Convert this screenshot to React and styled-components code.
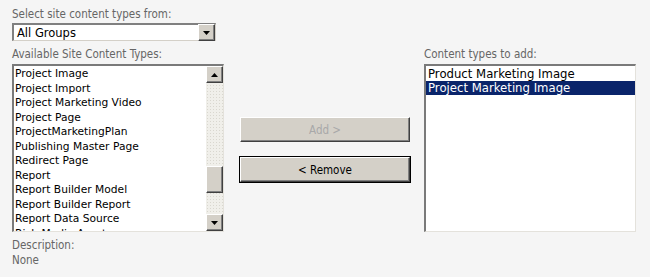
import React from 'react'
import styled, { createGlobalStyle } from 'styled-components'

const Global = createGlobalStyle`
  html, body {
    margin: 0;
    background: #f5f5f5;
  }
`

const Page = styled.div`
  width: 650px;
  height: 277px;
  box-sizing: border-box;
  padding: 7px 0 0 12px;
  background: #f5f5f5;
  font-family: "DejaVu Sans Condensed", Tahoma, sans-serif;
`

const Label = styled.div`
  font-size: 11.5px;
  line-height: 14px;
  color: #666;
  height: ${(p) => p.h || 14}px;
`

const SelectBox = styled.div`
  width: 204px;
  height: 18px;
  box-sizing: border-box;
  margin-top: 2px;
  background: #fff;
  border-top: 2px solid #808080;
  border-left: 2px solid #808080;
  border-right: 1px solid #d4d0c8;
  border-bottom: 1px solid #d4d0c8;
  display: flex;
  align-items: center;
  justify-content: space-between;
  font-family: "DejaVu Sans", Verdana, sans-serif;
  font-size: 11.5px;
  color: #000;
  padding-left: 3px;
`

const Row = styled.div`
  display: flex;
  align-items: flex-start;
  margin-top: 6px;
`

const Column = styled.div`
  display: flex;
  flex-direction: column;
  width: ${(p) => p.w}px;
`

const ListBox = styled.div`
  width: ${(p) => p.w}px;
  height: 168px;
  box-sizing: border-box;
  margin-top: 3px;
  background: #fff;
  border-top: 2px solid #7a7a7a;
  border-left: 2px solid #7a7a7a;
  border-right: 1px solid #e4e2dc;
  border-bottom: 1px solid #e4e2dc;
  display: flex;
  overflow: hidden;
`

const Items = styled.div`
  flex: 1;
  overflow: hidden;
  padding-top: 1px;
`

const Item = styled.div`
  font-family: "DejaVu Sans", Verdana, sans-serif;
  font-size: ${(p) => p.size || 10.7}px;
  line-height: ${(p) => p.rowH || 14.5}px;
  height: ${(p) => p.rowH || 14.5}px;
  padding-left: ${(p) => (p.size ? 2 : 1)}px;
  white-space: nowrap;
  color: ${(p) => (p.selected ? '#fff' : '#000')};
  background: ${(p) => (p.selected ? '#0a246a' : 'transparent')};
`

const ScrollBar = styled.div`
  width: 17px;
  display: flex;
  flex-direction: column;
  background-color: #f0efea;
  background-image: radial-gradient(#d9d7cf 0.8px, transparent 1px);
  background-size: 3px 3px;
`

const ArrowButton = styled.div`
  width: 17px;
  height: 17px;
  box-sizing: border-box;
  background: #d4d0c8;
  border-top: 1px solid #fff;
  border-left: 1px solid #fff;
  border-right: 1px solid #404040;
  border-bottom: 1px solid #404040;
  box-shadow: inset -1px -1px 0 #808080;
  display: flex;
  align-items: center;
  justify-content: center;
  flex-shrink: 0;
`

const Track = styled.div`
  flex: 1;
  display: flex;
  flex-direction: column;
`

const Thumb = styled(ArrowButton)`
  height: 27px;
  margin-top: ${(p) => p.offset}px;
`

const Middle = styled.div`
  width: 170px;
  margin: 70px 14px 0 16px;
  display: flex;
  flex-direction: column;
  gap: 15px;
`

const Button = styled.button`
  width: 170px;
  height: 25px;
  box-sizing: border-box;
  background: #d4d0c8;
  font-family: "DejaVu Sans Condensed", Tahoma, sans-serif;
  font-size: 11.5px;
  color: ${(p) => (p.disabled ? '#a8a8a8' : '#000')};
  border-top: 1px solid #fff;
  border-left: 1px solid #fff;
  border-right: 1px solid #404040;
  border-bottom: 1px solid #404040;
  box-shadow: inset -1px -1px 0 #808080;
  outline: ${(p) => (p.focused ? '1px solid #000' : 'none')};
  outline-offset: 0;
  padding: 0;
  cursor: default;
`

const Desc = styled.div`
  margin-top: 6px;
`

const Arrow = ({ up }) => (
  <svg width="7" height="4" viewBox="0 0 7 4">
    <path d={up ? 'M3.5 0 L7 4 L0 4 Z' : 'M0 0 L7 0 L3.5 4 Z'} fill="#000" />
  </svg>
)

const available = [
  'Project Image',
  'Project Import',
  'Project Marketing Video',
  'Project Page',
  'ProjectMarketingPlan',
  'Publishing Master Page',
  'Redirect Page',
  'Report',
  'Report Builder Model',
  'Report Builder Report',
  'Report Data Source',
  'Rich Media Asset',
]

const toAdd = ['Product Marketing Image', 'Project Marketing Image']

export default function App() {
  return (
    <Page>
      <Global />
      <Label>Select site content types from:</Label>
      <SelectBox>
        <span>All Groups</span>
        <ArrowButton>
          <Arrow />
        </ArrowButton>
      </SelectBox>
      <Row>
        <Column w={212}>
          <Label>Available Site Content Types:</Label>
          <ListBox w={212}>
            <Items>
              {available.map((t) => (
                <Item key={t}>{t}</Item>
              ))}
            </Items>
            <ScrollBar>
              <ArrowButton>
                <Arrow up />
              </ArrowButton>
              <Track>
                <Thumb offset={83} />
              </Track>
              <ArrowButton>
                <Arrow />
              </ArrowButton>
            </ScrollBar>
          </ListBox>
        </Column>
        <Middle>
          <Button disabled>Add &gt;</Button>
          <Button focused>&lt; Remove</Button>
        </Middle>
        <Column w={212}>
          <Label>Content types to add:</Label>
          <ListBox w={212}>
            <Items>
              {toAdd.map((t, i) => (
                <Item key={t} size={11.7} rowH={14} selected={i === 1}>
                  {t}
                </Item>
              ))}
            </Items>
          </ListBox>
        </Column>
      </Row>
      <Desc>
        <Label h={15}>Description:</Label>
        <Label>None</Label>
      </Desc>
    </Page>
  )
}
